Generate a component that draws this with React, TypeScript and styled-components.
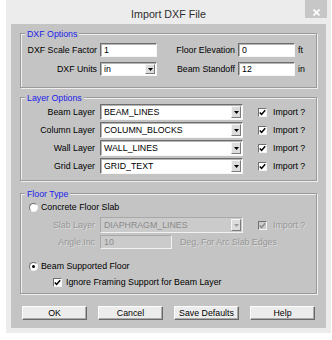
import * as React from 'react';
import styled, { createGlobalStyle } from 'styled-components';

const FACE = '#c4c4c4';

const GlobalStyle = createGlobalStyle`
  body { margin: 0; background: #fff; }
  * { box-sizing: border-box; }
`;

export default function App() {
    return <>
        <GlobalStyle />
        <Window>
            <TitleBar>
                <Title>Import DXF File</Title>
                <CloseBtn>
                    <svg width="7" height="7" viewBox="0 0 7 7">
                        <path d="M0.5 0.5 L6.5 6.5 M6.5 0.5 L0.5 6.5" stroke="#fff" strokeWidth="1.6" />
                    </svg>
                </CloseBtn>
            </TitleBar>
            <Client>
                {/* DXF options */}
                <Group $mt={9} $pb={11}>
                    <Legend>DXF Options</Legend>
                    <DxfGrid>
                        <Label>DXF Scale Factor</Label>
                        <TextBox defaultValue="1" />
                        <Label>Floor Elevation</Label>
                        <TextBox defaultValue="0" />
                        <Unit>ft</Unit>
                        <Label>DXF Units</Label>
                        <Combo value="in" h={14} />
                        <Label>Beam Standoff</Label>
                        <TextBox defaultValue="12" />
                        <Unit>in</Unit>
                    </DxfGrid>
                </Group>

                {/* Layer options */}
                <Group $mt={9} $pb={6}>
                    <Legend>Layer Options</Legend>
                    <LayerGrid>
                        <Label>Beam Layer</Label>
                        <Combo value="BEAM_LINES" h={16} />
                        <Check label="Import ?" />
                        <Label>Column Layer</Label>
                        <Combo value="COLUMN_BLOCKS" h={16} />
                        <Check label="Import ?" />
                        <Label>Wall Layer</Label>
                        <Combo value="WALL_LINES" h={16} />
                        <Check label="Import ?" />
                        <Label>Grid Layer</Label>
                        <Combo value="GRID_TEXT" h={16} />
                        <Check label="Import ?" />
                    </LayerGrid>
                </Group>

                {/* Floor type */}
                <Group $mt={12} $pb={5}>
                    <Legend>Floor Type</Legend>
                    <Stack>
                        <Radio label="Concrete Floor Slab" />
                        <LayerGrid $mt={4}>
                            <Label $disabled>Slab Layer</Label>
                            <Combo value="DIAPHRAGM_LINES" h={16} disabled />
                            <Check label="Import ?" disabled />
                        </LayerGrid>
                        <LineRow $mt={2}>
                            <Label $disabled $w={74}>Angle Inc</Label>
                            <TextBox defaultValue="10" disabled $w={72} />
                            <Note>Deg, For Arc Slab Edges</Note>
                        </LineRow>
                        <Radio label="Beam Supported Floor" selected $mt={11} />
                        <IndentRow>
                            <Check label="Ignore Framing Support for Beam Layer" gap={4} />
                        </IndentRow>
                    </Stack>
                </Group>

                <ButtonBar>
                    <Button>OK</Button>
                    <Button>Cancel</Button>
                    <Button>Save Defaults</Button>
                    <Button>Help</Button>
                </ButtonBar>
            </Client>
        </Window>
    </>;
}

//Controls

function Combo(props: { value: string; h: number; disabled?: boolean }) {
    return <ComboBox $h={props.h} $disabled={props.disabled}>
        <ComboText>{props.value}</ComboText>
        <DropBtn>
            <svg width="5" height="3" viewBox="0 0 5 3">
                <polygon points="0,0 5,0 2.5,3" fill={props.disabled ? '#9a9a9a' : '#000'} />
            </svg>
        </DropBtn>
    </ComboBox>;
}

function Check(props: { label: string; disabled?: boolean; gap?: number }) {
    return <CheckWrap $gap={props.gap || 6}>
        <CheckBox $disabled={props.disabled}>
            <svg width="7" height="7" viewBox="0 0 7 7">
                <polyline points="0.8,3.4 2.6,5.4 6.2,1.2" fill="none" stroke={props.disabled ? '#8a8a8a' : '#000'} strokeWidth="1.5" />
            </svg>
        </CheckBox>
        <Text $disabled={props.disabled}>{props.label}</Text>
    </CheckWrap>;
}

function Radio(props: { label: string; selected?: boolean; $mt?: number }) {
    return <RadioRow $mt={props.$mt || 0}>
        <RadioDot>{props.selected && <Dot />}</RadioDot>
        <Text>{props.label}</Text>
    </RadioRow>;
}

//Style Components
const Window = styled.div`
  margin-left: 6px;
  width: 325px;
  height: 333px;
  background: #ececec;
  display: flex;
  flex-direction: column;
  font-family: "Liberation Sans", Arial, sans-serif;
  font-size: 8.8px;
  color: #000;
`;

const TitleBar = styled.div`
  height: 24px;
  display: grid;
  grid-template-columns: 1fr auto 1fr;
  align-items: start;
`;

const Title = styled.div`
  grid-column: 2;
  padding-top: 8px;
  font-size: 10.7px;
  line-height: 12px;
  color: #2e2e2e;
`;

const CloseBtn = styled.div`
  grid-column: 3;
  justify-self: end;
  width: 22px;
  height: 18px;
  margin-right: 4px;
  padding-top: 9px;
  background: #c7c7c7;
  display: flex;
  justify-content: center;
  align-items: flex-start;
`;

const Client = styled.div`
  flex: 1;
  margin: 0 5px 5px;
  padding: 0 9px;
  background: ${FACE};
  display: flex;
  flex-direction: column;
`;

const Group = styled.div<{ $mt: number; $pb: number }>`
  margin-top: ${p => p.$mt}px;
  padding-bottom: ${p => p.$pb}px;
  border: 1px solid #9a9a9a;
  box-shadow: inset 1px 1px 0 #efefef, 1px 1px 0 #efefef;
  display: flex;
  flex-direction: column;
`;

const Legend = styled.div`
  align-self: flex-start;
  margin: -6px 0 0 4px;
  padding: 0 2px;
  line-height: 12px;
  background: ${FACE};
  color: #1c1ce8;
`;

const DxfGrid = styled.div`
  margin-top: 3px;
  display: grid;
  grid-template-columns: 76px 57px 75px 57px auto;
  grid-auto-rows: 14px;
  column-gap: 3px;
  row-gap: 5px;
  align-items: center;
`;

const LayerGrid = styled.div<{ $mt?: number }>`
  margin-top: ${p => p.$mt || 0}px;
  display: grid;
  grid-template-columns: 74px 143px auto;
  grid-auto-rows: 16px;
  column-gap: 5px;
  row-gap: 2px;
  align-items: center;
`;

const Stack = styled.div`
  margin-top: 1px;
  display: flex;
  flex-direction: column;
`;

const LineRow = styled.div<{ $mt: number }>`
  margin-top: ${p => p.$mt}px;
  height: 14px;
  display: flex;
  align-items: center;
`;

const IndentRow = styled.div`
  margin-top: 4px;
  height: 12px;
  padding-left: 32px;
  display: flex;
  align-items: center;
`;

const Label = styled.span<{ $disabled?: boolean; $w?: number }>`
  ${p => p.$w ? `width: ${p.$w}px; margin-right: 5px;` : ''}
  text-align: right;
  white-space: nowrap;
  color: ${p => p.$disabled ? '#979797' : '#000'};
  ${p => p.$disabled ? 'text-shadow: 1px 1px 0 #dcdcdc;' : ''}
`;

const Text = styled.span<{ $disabled?: boolean }>`
  white-space: nowrap;
  color: ${p => p.$disabled ? '#979797' : '#000'};
  ${p => p.$disabled ? 'text-shadow: 1px 1px 0 #dcdcdc;' : ''}
`;

const Note = styled(Text).attrs({ $disabled: true })`
  margin-left: 8px;
`;

const Unit = styled.span`
  white-space: nowrap;
`;

const TextBox = styled.input<{ $w?: number }>`
  width: ${p => p.$w ? `${p.$w}px` : '100%'};
  height: 14px;
  padding: 0 3px;
  margin: 0;
  font: inherit;
  color: #000;
  background: #fff;
  border: 1px solid;
  border-color: #6e6e6e #f6f6f6 #f6f6f6 #6e6e6e;
  box-shadow: inset 1px 1px 0 #b4b4b4;
  outline: none;

  &:disabled {
    background: #cbcbcb;
    color: #8a8a8a;
    border-color: #a8a8a8 #f2f2f2 #f2f2f2 #a8a8a8;
    box-shadow: none;
  }
`;

const ComboBox = styled.div<{ $h: number; $disabled?: boolean }>`
  height: ${p => p.$h}px;
  display: flex;
  align-items: stretch;
  background: ${p => p.$disabled ? '#cbcbcb' : '#fff'};
  color: ${p => p.$disabled ? '#8a8a8a' : '#000'};
  border: 1px solid;
  border-color: ${p => p.$disabled ? '#a8a8a8 #f2f2f2 #f2f2f2 #a8a8a8' : '#6e6e6e #f6f6f6 #f6f6f6 #6e6e6e'};
  box-shadow: ${p => p.$disabled ? 'none' : 'inset 1px 1px 0 #b4b4b4'};
`;

const ComboText = styled.span`
  flex: 1;
  padding-left: 3px;
  display: flex;
  align-items: center;
  white-space: nowrap;
  overflow: hidden;
`;

const DropBtn = styled.span`
  width: 10px;
  margin: 1px 1px 1px 0;
  background: #dcdcdc;
  border: 1px solid;
  border-color: #f6f6f6 #7a7a7a #7a7a7a #f6f6f6;
  display: flex;
  align-items: center;
  justify-content: center;
`;

const CheckWrap = styled.span<{ $gap: number }>`
  margin-left: 10px;
  display: flex;
  align-items: center;
  gap: ${p => p.$gap}px;

  ${IndentRow} & {
    margin-left: 0;
  }
`;

const CheckBox = styled.span<{ $disabled?: boolean }>`
  width: 9px;
  height: 9px;
  flex: none;
  background: ${p => p.$disabled ? '#cbcbcb' : '#fff'};
  border: 1px solid;
  border-color: #707070 #f4f4f4 #f4f4f4 #707070;
  display: flex;
  align-items: center;
  justify-content: center;
`;

const RadioRow = styled.div<{ $mt: number }>`
  margin-top: ${p => p.$mt}px;
  height: 12px;
  padding-left: 8px;
  display: flex;
  align-items: center;
  gap: 3px;
`;

const RadioDot = styled.span`
  width: 9px;
  height: 9px;
  flex: none;
  border-radius: 50%;
  background: #fff;
  border: 1px solid;
  border-color: #707070 #f4f4f4 #f4f4f4 #707070;
  display: flex;
  align-items: center;
  justify-content: center;
`;

const Dot = styled.span`
  width: 3px;
  height: 3px;
  border-radius: 50%;
  background: #000;
`;

const ButtonBar = styled.div`
  margin-top: 12px;
  padding: 0 2px;
  display: flex;
  justify-content: space-between;
`;

const Button = styled.button`
  width: 65px;
  height: 14px;
  padding: 0;
  font: inherit;
  color: #000;
  background: #ececec;
  border: 1px solid;
  border-color: #fdfdfd #6a6a6a #6a6a6a #fdfdfd;
  box-shadow: inset -1px -1px 0 #ababab;
`;
